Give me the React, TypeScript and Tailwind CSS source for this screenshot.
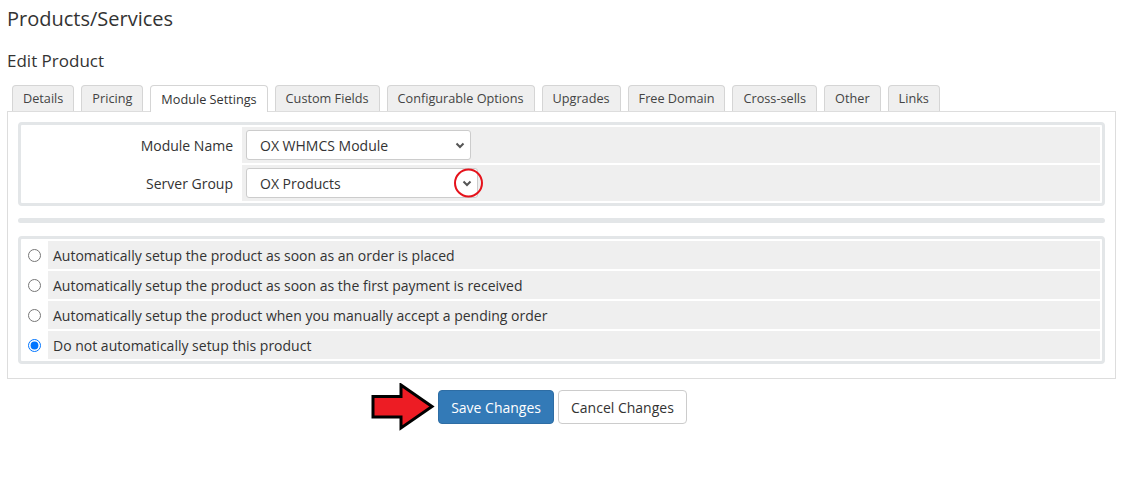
import React from 'react';

const tabs = [
  'Details',
  'Pricing',
  'Module Settings',
  'Custom Fields',
  'Configurable Options',
  'Upgrades',
  'Free Domain',
  'Cross-sells',
  'Other',
  'Links',
];

const setupOptions = [
  'Automatically setup the product as soon as an order is placed',
  'Automatically setup the product as soon as the first payment is received',
  'Automatically setup the product when you manually accept a pending order',
  'Do not automatically setup this product',
];

function Chevron() {
  return (
    <svg width="10" height="7" viewBox="0 0 10 7" className="shrink-0">
      <path d="M1.5 1.5 5 5l3.5-3.5" fill="none" stroke="#555" strokeWidth="2" />
    </svg>
  );
}

function FakeSelect({ value, width, circled }: { value: string; width: string; circled?: boolean }) {
  return (
    <div className={`relative flex h-[30px] items-center rounded-[3px] border border-[#ccc] bg-white pl-[13px] pr-[5px] ${width}`}>
      <span className="flex-1">{value}</span>
      <Chevron />
      {circled && (
        <span className="absolute right-[-6px] top-1/2 h-[29px] w-[29px] -translate-y-1/2 rounded-full border-2 border-[#e5121b]" />
      )}
    </div>
  );
}

function RedArrow() {
  return (
    <svg width="64" height="48" viewBox="0 0 64 48" className="absolute right-full top-1/2 mr-[3px] -translate-y-1/2">
      <polygon
        points="2,13.5 30,13.5 30,2 61,23.5 30,45 30,34 2,34"
        fill="#ed1c24"
        stroke="#000"
        strokeWidth="3"
        strokeLinejoin="miter"
      />
    </svg>
  );
}

export default function App() {
  return (
    <div className="min-h-screen bg-white pl-[7px] pr-[5px] pt-[5px] text-[14px] text-[#333] font-['Open_Sans',sans-serif]">
      <h1 className="text-[20px] leading-[28px] text-[#333]">Products/Services</h1>
      <h2 className="mt-[16px] text-[17px] leading-[24px] text-[#333]">Edit Product</h2>

      {/* tabs */}
      <div className="mt-[12px] flex gap-[7px] pl-[5px]">
        {tabs.map((t) => {
          const active = t === 'Module Settings';
          return (
            <div
              key={t}
              className={
                active
                  ? 'relative z-10 -mb-px flex h-[27px] items-center rounded-t-[4px] border border-b-0 border-[#d5d5d5] bg-white px-[10px] pt-px text-[12.7px] text-[#333]'
                  : 'flex h-[26px] items-center rounded-t-[4px] border border-b-0 border-[#d5d5d5] bg-[#efefef] px-[10px] pt-px text-[12.7px] text-[#444]'
              }
            >
              {t}
            </div>
          );
        })}
      </div>

      {/* panel */}
      <div className="border border-[#ddd] bg-white px-[10px] pb-[14px] pt-[10px]">
        <div className="rounded-[4px] border-[3px] border-[#e3e6e8] bg-white p-[2px]">
          <div className="flex flex-col gap-[2px]">
            <div className="flex h-[36px] gap-[2px]">
              <div className="flex w-[217px] items-center justify-end pr-[7px]">Module Name</div>
              <div className="flex flex-1 items-center bg-[#efefef] pl-[4px]">
                <FakeSelect value="OX WHMCS Module" width="w-[225px]" />
              </div>
            </div>
            <div className="flex h-[36px] gap-[2px]">
              <div className="flex w-[217px] items-center justify-end pr-[7px]">Server Group</div>
              <div className="flex flex-1 items-center bg-[#efefef] pl-[4px]">
                <FakeSelect value="OX Products" width="w-[232px]" circled />
              </div>
            </div>
          </div>
        </div>

        <div className="mt-[12px] h-[5px] rounded-full bg-[#e3e6e8]" />

        <div className="mt-[13px] rounded-[4px] border-[3px] border-[#e3e6e8] bg-white p-[2px]">
          <div className="flex flex-col gap-[2px]">
            {setupOptions.map((o, i) => (
              <div key={o} className="flex h-[28px] gap-[2px]">
                <div className="flex w-[23px] items-center justify-center">
                  <input
                    type="radio"
                    name="autosetup"
                    defaultChecked={i === 3}
                    className="m-0 h-[13px] w-[13px]"
                  />
                </div>
                <div className="flex flex-1 items-center bg-[#efefef] pl-[5px]">{o}</div>
              </div>
            ))}
          </div>
        </div>
      </div>

      {/* buttons */}
      <div className="mt-[11px] flex justify-center gap-[4px] pl-[2px]">
        <div className="relative">
          <RedArrow />
          <button className="h-[34px] rounded-[4px] border border-[#2e6da4] bg-[#337ab7] px-[12px] text-white">
            Save Changes
          </button>
        </div>
        <button className="h-[34px] rounded-[4px] border border-[#ccc] bg-white px-[12px] text-[#333]">
          Cancel Changes
        </button>
      </div>
    </div>
  );
}
